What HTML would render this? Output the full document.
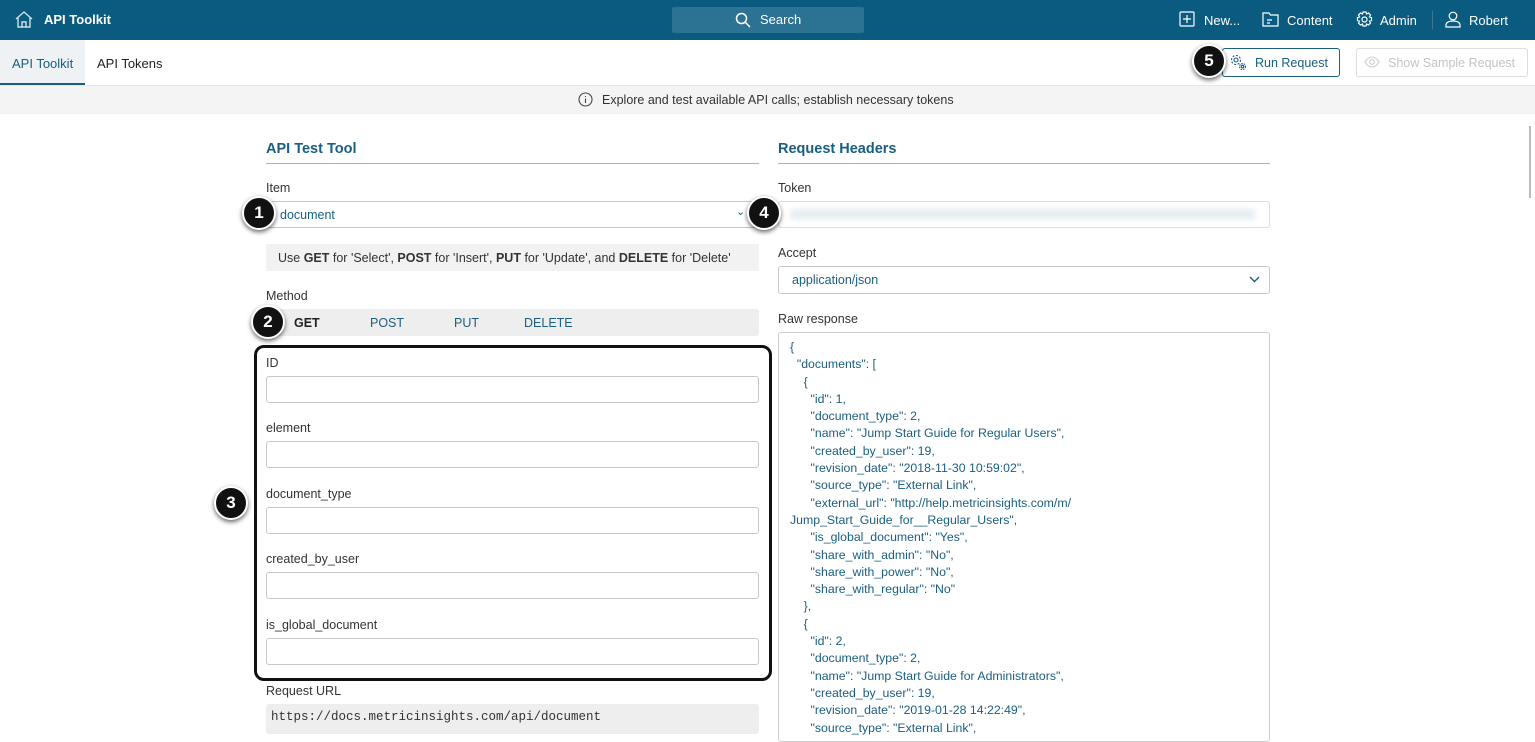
<!DOCTYPE html><html><head><style>
*{box-sizing:border-box;margin:0;padding:0}
body{width:1535px;height:731px;overflow:hidden;font-family:"Liberation Sans",sans-serif;font-size:13px;color:#333;background:#fff;position:relative}
.a{position:absolute}
.top{left:0;top:0;width:1535px;height:40px;background:#0a5b7f;color:#fff}
.lbl{font-size:12.5px;color:#333}
.inp{border:1px solid #c8c8c8;border-radius:3px;background:#fff;width:493px;height:27px;left:266px}
.b{width:34px;height:34px;border-radius:50%;background:#111;color:#fff;border:2px solid #fff;box-shadow:0 2px 5px rgba(0,0,0,.6);font-size:17px;text-align:center;line-height:30px;font-weight:bold}
.sec{font-size:14.5px;font-weight:bold;color:#1a5e80;border-bottom:1px solid #9fb8c8;padding-bottom:6px}
.js{left:790px;top:339px;font-size:12.3px;line-height:17.3px;color:#1a5e80;white-space:pre}
</style></head><body>
<div class="a top">
 <svg class="a" style="left:15px;top:11px" width="18" height="17" viewBox="0 0 18 17" fill="none" stroke="#cfe0ea" stroke-width="1.4"><path d="M1 8L9 1l8 7M3 6.5V16h12V6.5M7 16v-5h4v5"/></svg>
 <div class="a" style="left:44px;top:12px;font-weight:bold;font-size:13px">API Toolkit</div>
 <div class="a" style="left:672px;top:7px;width:192px;height:26px;background:#2b7293;border-radius:2px"></div>
 <svg class="a" style="left:735px;top:12px" width="16" height="16" viewBox="0 0 16 16" fill="none" stroke="#fff" stroke-width="1.5"><circle cx="6.5" cy="6.5" r="5"/><path d="M10.5 10.5L15 15"/></svg>
 <div class="a" style="left:760px;top:12px;font-size:13px">Search</div>
 <svg class="a" style="left:1179px;top:11px" width="16" height="16" viewBox="0 0 16 16" fill="none" stroke="#fff" stroke-width="1.2"><rect x="1" y="1" width="14" height="14" rx="1"/><path d="M8 4v8M4 8h8"/></svg>
 <div class="a" style="left:1204px;top:13px">New...</div>
 <svg class="a" style="left:1262px;top:11px" width="17" height="16" viewBox="0 0 17 16" fill="none" stroke="#fff" stroke-width="1.2"><path d="M1 2h6l1.5 2H16v11H1z M5 9h5M5 12h3"/></svg>
 <div class="a" style="left:1287px;top:13px">Content</div>
 <svg class="a" style="left:1356px;top:11px" width="17" height="17" viewBox="0 0 17 17" fill="none" stroke="#fff" stroke-width="1.2"><circle cx="8.5" cy="8.5" r="2.5"/><path d="M7 1h3l.5 2 2-1 2 2-1 2 2 .5v3l-2 .5 1 2-2 2-2-1-.5 2H7l-.5-2-2 1-2-2 1-2-2-.5v-3l2-.5-1-2 2-2 2 1z"/></svg>
 <div class="a" style="left:1380px;top:13px">Admin</div>
 <div class="a" style="left:1432px;top:11px;width:1px;height:18px;background:#3b7896"></div>
 <svg class="a" style="left:1445px;top:11px" width="16" height="17" viewBox="0 0 16 17" fill="none" stroke="#fff" stroke-width="1.2"><circle cx="8" cy="5" r="3.8"/><path d="M1 16v-2c0-2 2-4 7-4s7 2 7 4v2z"/></svg>
 <div class="a" style="left:1469px;top:13px">Robert</div>
</div>
<div class="a" style="left:0;top:40px;width:85px;height:45px;background:#eef2f5;border-bottom:2px solid #1a5e80"></div>
<div class="a" style="left:12px;top:56px;color:#1a5e80">API Toolkit</div>
<div class="a" style="left:97px;top:56px;color:#222">API Tokens</div>
<div class="a" style="left:1222px;top:48px;width:118px;height:29px;border:1px solid #1a5e80;border-radius:3px"></div>
<svg class="a" style="left:1230px;top:54px" width="17" height="17" viewBox="0 0 17 17" fill="none" stroke="#1a5e80" stroke-width="1.1"><circle cx="6" cy="6" r="2"/><circle cx="6" cy="6" r="4.5" stroke-dasharray="2 1.5"/><circle cx="12.5" cy="12.5" r="1.3"/><circle cx="12.5" cy="12.5" r="3" stroke-dasharray="1.5 1"/></svg>
<div class="a" style="left:1255px;top:56px;color:#1a5e80;font-size:12.5px">Run Request</div>
<div class="a" style="left:1356px;top:48px;width:172px;height:29px;border:1px solid #ddd;border-radius:3px"></div>
<svg class="a" style="left:1364px;top:56px" width="16" height="12" viewBox="0 0 16 12" fill="none" stroke="#ccc" stroke-width="1.1"><path d="M1 6c2-3.5 4.5-5 7-5s5 1.5 7 5c-2 3.5-4.5 5-7 5s-5-1.5-7-5z"/><circle cx="8" cy="6" r="2.3"/></svg>
<div class="a" style="left:1388px;top:56px;color:#c4c4c4;font-size:12.5px">Show Sample Request</div>
<div class="a" style="left:0;top:85px;width:1535px;height:29px;background:#f4f4f4;border-top:1px solid #e6e6e6"></div>
<svg class="a" style="left:578px;top:92px" width="15" height="15" viewBox="0 0 15 15" fill="none" stroke="#444" stroke-width="1.1"><circle cx="7.5" cy="7.5" r="6.5"/><path d="M7.5 6.5v4.5M7.5 4v1"/></svg>
<div class="a" style="left:602px;top:93px;font-size:12.5px;color:#333">Explore and test available API calls; establish necessary tokens</div>
<div class="a" style="left:1529px;top:126px;width:2px;height:72px;background:#bbb"></div>

<div class="a sec" style="left:266px;top:141px;width:493px">API Test Tool</div>
<div class="a sec" style="left:778px;top:141px;width:492px">Request Headers</div>
<div class="a lbl" style="left:266px;top:181px">Item</div>
<div class="a inp" style="top:201px;height:27px"></div>
<div class="a" style="left:280px;top:208px;color:#1a5e80;font-size:12.5px">document</div>
<div class="a" style="left:736px;top:205px;color:#1a5e80;font-size:11px">&#8964;</div>
<div class="a" style="left:266px;top:244px;width:493px;height:27px;background:#f2f2f2"></div>
<div class="a" style="left:278px;top:251px;font-size:12.5px;color:#333">Use <b>GET</b> for 'Select', <b>POST</b> for 'Insert', <b>PUT</b> for 'Update', and <b>DELETE</b> for 'Delete'</div>
<div class="a lbl" style="left:266px;top:289px">Method</div>
<div class="a" style="left:266px;top:309px;width:493px;height:27px;background:#eee;border-radius:3px"></div>
<div class="a" style="left:294px;top:316px;font-weight:bold;font-size:12.5px;color:#222">GET</div>
<div class="a" style="left:370px;top:316px;color:#1a5e80;font-size:12.5px">POST</div>
<div class="a" style="left:454px;top:316px;color:#1a5e80;font-size:12.5px">PUT</div>
<div class="a" style="left:524px;top:316px;color:#1a5e80;font-size:12.5px">DELETE</div>

<div class="a lbl" style="left:266px;top:356px">ID</div><div class="a inp" style="top:376px"></div>
<div class="a lbl" style="left:266px;top:421px">element</div><div class="a inp" style="top:441px"></div>
<div class="a lbl" style="left:266px;top:487px">document_type</div><div class="a inp" style="top:507px"></div>
<div class="a lbl" style="left:266px;top:552px">created_by_user</div><div class="a inp" style="top:572px"></div>
<div class="a lbl" style="left:266px;top:618px">is_global_document</div><div class="a inp" style="top:638px"></div>
<div class="a" style="left:254px;top:345px;width:518px;height:336px;border:3px solid #111;border-radius:10px"></div>
<div class="a lbl" style="left:266px;top:684px">Request URL</div>
<div class="a" style="left:266px;top:704px;width:493px;height:30px;background:#eee;border-radius:3px"></div>
<div class="a" style="left:271px;top:710px;font-family:'Liberation Mono',monospace;font-size:12.5px;color:#333">https://docs.metricinsights.com/api/document</div>

<div class="a lbl" style="left:778px;top:181px">Token</div>
<div class="a" style="left:778px;top:201px;width:492px;height:27px;border:1px solid #ddd;border-radius:3px"></div>
<div class="a" style="left:790px;top:209px;width:465px;height:10px;background:#e6ecf0;filter:blur(3px)"></div>
<div class="a lbl" style="left:778px;top:246px">Accept</div>
<div class="a" style="left:778px;top:266px;width:492px;height:28px;border:1px solid #c8c8c8;border-radius:3px"></div>
<div class="a" style="left:792px;top:273px;color:#1a5e80;font-size:12.5px">application/json</div>
<svg class="a" style="left:1249px;top:276px" width="11" height="7" viewBox="0 0 11 7" fill="none" stroke="#1a5e80" stroke-width="1.4"><path d="M1 1l4.5 4.5L10 1"/></svg>
<div class="a lbl" style="left:778px;top:312px">Raw response</div>
<div class="a" style="left:778px;top:332px;width:492px;height:410px;border:1px solid #ccc;border-radius:3px"></div>
<div class="a js">{
  "documents": [
    {
      "id": 1,
      "document_type": 2,
      "name": "Jump Start Guide for Regular Users",
      "created_by_user": 19,
      "revision_date": "2018-11-30 10:59:02",
      "source_type": "External Link",
      "external_url": "http://help.metricinsights.com/m/
Jump_Start_Guide_for__Regular_Users",
      "is_global_document": "Yes",
      "share_with_admin": "No",
      "share_with_power": "No",
      "share_with_regular": "No"
    },
    {
      "id": 2,
      "document_type": 2,
      "name": "Jump Start Guide for Administrators",
      "created_by_user": 19,
      "revision_date": "2019-01-28 14:22:49",
      "source_type": "External Link",</div>

<div class="a b" style="left:242px;top:196px">1</div>
<div class="a b" style="left:251px;top:305px">2</div>
<div class="a b" style="left:214px;top:486px">3</div>
<div class="a b" style="left:747px;top:196px">4</div>
<div class="a b" style="left:1192px;top:44px">5</div>
</body></html>
